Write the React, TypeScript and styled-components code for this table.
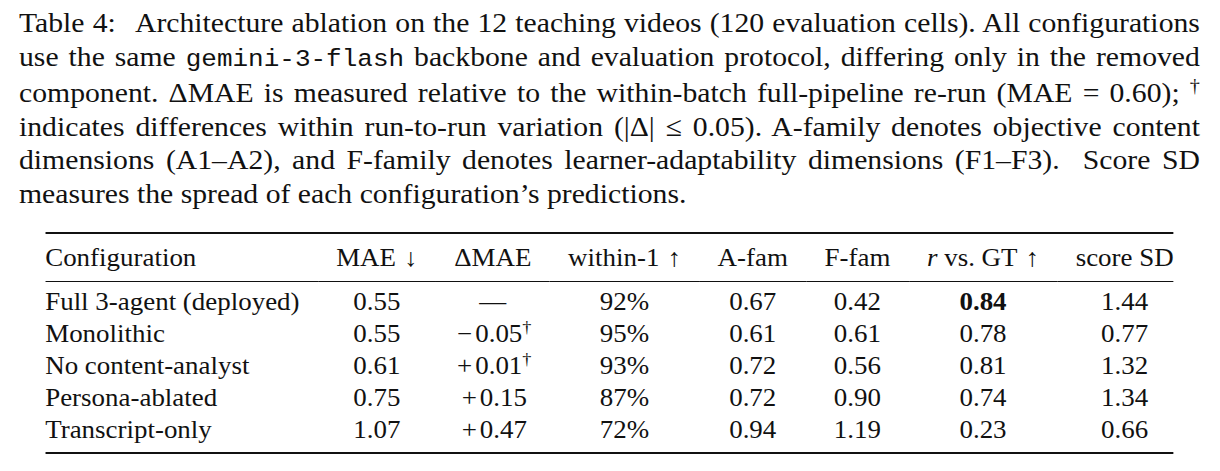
import React from "react";
import styled, { createGlobalStyle } from "styled-components";

const Global = createGlobalStyle`
  html, body { margin: 0; padding: 0; background: #ffffff; }
  body { font-family: "Liberation Serif", "Times New Roman", serif; color: #111111; }
`;

const Page = styled.div`
  width: 1220px;
  height: 471px;
  box-sizing: border-box;
  padding: 6px 0 0 19px;
  overflow: hidden;
`;

const Stretch = styled.div`
  width: 1113px;
  transform: scaleX(1.061);
  transform-origin: 0 0;
`;

const Caption = styled.div`
  font-size: 28px;
  line-height: 33.6px;
`;

const CaptionLine = styled.div<{ $last?: boolean }>`
  text-align: ${(p) => (p.$last ? "left" : "justify")};
  text-align-last: ${(p) => (p.$last ? "left" : "justify")};
`;

const Label = styled.span`
  margin-right: 12px;
`;

const Mono = styled.span`
  font-family: "Liberation Mono", "Courier New", monospace;
  font-size: 24.5px;
`;

const Sup = styled.sup`
  font-size: 0.68em;
  line-height: 0;
  vertical-align: 0.55em;
`;

const Table = styled.table`
  margin: 21.4px auto 0;
  border-collapse: separate;
  border-spacing: 0;
  font-size: 25.4px;
  border-top: 2px solid #111111;
  border-bottom: 2px solid #111111;
`;

const Th = styled.th<{ $left?: boolean }>`
  font-weight: 400;
  text-align: ${(p) => (p.$left ? "left" : "center")};
  white-space: nowrap;
  line-height: 32px;
  padding: 7px 17.25px 8px;
  border-bottom: 1px solid #111111;
  &:first-child { padding-left: 0; }
  &:last-child { padding-right: 0; }
`;

const Row = styled.tr`
  &:first-child td { padding-top: 3.5px; }
  &:last-child td { padding-bottom: 6.5px; }
`;

const Td = styled.td<{ $left?: boolean; $bold?: boolean }>`
  text-align: ${(p) => (p.$left ? "left" : "center")};
  font-weight: ${(p) => (p.$bold ? 700 : 400)};
  white-space: nowrap;
  line-height: 32px;
  padding: 0 17.25px;
  &:first-child { padding-left: 0; }
  &:last-child { padding-right: 0; }
`;

const Sign = styled.span`
  display: inline-block;
  width: 0.78em;
  text-align: center;
`;

const Arrow = styled.span`
  margin-left: 0.3em;
`;

type Delta = { sign?: "+" | "−"; value: string; dagger?: boolean } | null;

type RowData = {
  name: string;
  mae: string;
  delta: Delta;
  within: string;
  afam: string;
  ffam: string;
  r: string;
  rBold?: boolean;
  sd: string;
};

const rows: RowData[] = [
  { name: "Full 3-agent (deployed)", mae: "0.55", delta: null, within: "92%", afam: "0.67", ffam: "0.42", r: "0.84", rBold: true, sd: "1.44" },
  { name: "Monolithic", mae: "0.55", delta: { sign: "−", value: "0.05", dagger: true }, within: "95%", afam: "0.61", ffam: "0.61", r: "0.78", sd: "0.77" },
  { name: "No content-analyst", mae: "0.61", delta: { sign: "+", value: "0.01", dagger: true }, within: "93%", afam: "0.72", ffam: "0.56", r: "0.81", sd: "1.32" },
  { name: "Persona-ablated", mae: "0.75", delta: { sign: "+", value: "0.15" }, within: "87%", afam: "0.72", ffam: "0.90", r: "0.74", sd: "1.34" },
  { name: "Transcript-only", mae: "1.07", delta: { sign: "+", value: "0.47" }, within: "72%", afam: "0.94", ffam: "1.19", r: "0.23", sd: "0.66" },
];

function DeltaCell({ d }: { d: Delta }) {
  if (!d) return <>—</>;
  return (
    <>
      <Sign>{d.sign}</Sign>
      {d.value}
      {d.dagger && <Sup>†</Sup>}
    </>
  );
}

export default function App() {
  return (
    <Page>
      <Global />
      <Stretch>
        <Caption>
          <CaptionLine>
            <Label>Table 4:</Label> Architecture ablation on the 12 teaching videos (120 evaluation cells). All configurations
          </CaptionLine>
          <CaptionLine>
            use the same <Mono>gemini-3-flash</Mono> backbone and evaluation protocol, differing only in the removed
          </CaptionLine>
          <CaptionLine>
            component. ΔMAE is measured relative to the within-batch full-pipeline re-run (MAE = 0.60); <Sup>†</Sup>
          </CaptionLine>
          <CaptionLine>
            indicates differences within run-to-run variation (|Δ| ≤ 0.05). A-family denotes objective content
          </CaptionLine>
          <CaptionLine>
            dimensions (A1–A2), and F-family denotes learner-adaptability dimensions (F1–F3).&nbsp; Score SD
          </CaptionLine>
          <CaptionLine $last>measures the spread of each configuration’s predictions.</CaptionLine>
        </Caption>
        <Table>
          <thead>
            <tr>
              <Th $left>Configuration</Th>
              <Th>
                MAE<Arrow>↓</Arrow>
              </Th>
              <Th>ΔMAE</Th>
              <Th>
                within-1<Arrow>↑</Arrow>
              </Th>
              <Th>A-fam</Th>
              <Th>F-fam</Th>
              <Th>
                <i>r</i> vs. GT<Arrow>↑</Arrow>
              </Th>
              <Th>score SD</Th>
            </tr>
          </thead>
          <tbody>
            {rows.map((r) => (
              <Row key={r.name}>
                <Td $left>{r.name}</Td>
                <Td>{r.mae}</Td>
                <Td>
                  <DeltaCell d={r.delta} />
                </Td>
                <Td>{r.within}</Td>
                <Td>{r.afam}</Td>
                <Td>{r.ffam}</Td>
                <Td $bold={r.rBold}>{r.r}</Td>
                <Td>{r.sd}</Td>
              </Row>
            ))}
          </tbody>
        </Table>
      </Stretch>
    </Page>
  );
}
